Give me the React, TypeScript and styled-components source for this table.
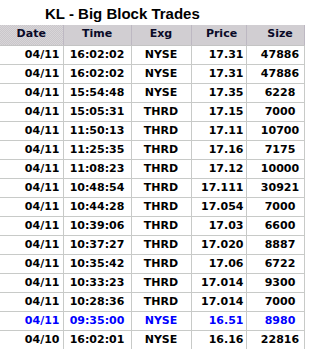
import React from "react";
import styled, { createGlobalStyle } from "styled-components";

const Global = createGlobalStyle`
  html, body { margin: 0; padding: 0; background: #ffffff; }
  body { font-family: "DejaVu Sans", Verdana, sans-serif; }
`;

const Wrap = styled.div`
  width: 312px;
  height: 349px;
  overflow: hidden;
  background: #ffffff;
`;

const Title = styled.div`
  height: 25px;
  box-sizing: border-box;
  padding: 5px 0 0 45px;
  font-family: "Liberation Sans", Arial, sans-serif;
  font-weight: bold;
  font-size: 15px;
  line-height: 18px;
  color: #000000;
  white-space: nowrap;
`;

const Table = styled.table`
  border-collapse: collapse;
  table-layout: fixed;
  width: 304px;
  font-family: "DejaVu Sans", Verdana, sans-serif;
  font-weight: bold;
  font-size: 11px;
`;

const Th = styled.th<{ $w: number; $pl?: number }>`
  width: ${(p) => p.$w}px;
  height: 20px;
  padding: 0 0 1px ${(p) => p.$pl ?? 0}px;
  box-sizing: border-box;
  background: repeating-conic-gradient(#d8d5d8 0 25%, #cac7cb 0 50%) 0 0 / 2px 2px;
  color: #0a0a28;
  text-align: center;
  border-right: 1px solid #bdb8c2;
  border-bottom: 1px solid #c4c4c4;
  font-weight: bold;
  line-height: 18px;
`;

const Tr = styled.tr<{ $blue?: boolean }>`
  color: ${(p) => (p.$blue ? "#0000ff" : "#000000")};
`;

const Td = styled.td<{ $align: "left" | "center" | "right"; $pl?: number; $pr?: number }>`
  height: 19px;
  box-sizing: border-box;
  padding: 0 ${(p) => p.$pr ?? 0}px 0 ${(p) => p.$pl ?? 0}px;
  text-align: ${(p) => p.$align};
  border-right: 1px solid #c8cac8;
  border-bottom: 1px solid #c8cac8;
  line-height: 18px;
  white-space: nowrap;
  background: #ffffff;
`;

type Row = [string, string, string, string, string, boolean?];

const rows: Row[] = [
  ["04/11", "16:02:02", "NYSE", "17.31", "47886"],
  ["04/11", "16:02:02", "NYSE", "17.31", "47886"],
  ["04/11", "15:54:48", "NYSE", "17.35", "6228"],
  ["04/11", "15:05:31", "THRD", "17.15", "7000"],
  ["04/11", "11:50:13", "THRD", "17.11", "10700"],
  ["04/11", "11:25:35", "THRD", "17.16", "7175"],
  ["04/11", "11:08:23", "THRD", "17.12", "10000"],
  ["04/11", "10:48:54", "THRD", "17.111", "30921"],
  ["04/11", "10:44:28", "THRD", "17.054", "7000"],
  ["04/11", "10:39:06", "THRD", "17.03", "6600"],
  ["04/11", "10:37:27", "THRD", "17.020", "8887"],
  ["04/11", "10:35:42", "THRD", "17.06", "6722"],
  ["04/11", "10:33:23", "THRD", "17.014", "9300"],
  ["04/11", "10:28:36", "THRD", "17.014", "7000"],
  ["04/11", "09:35:00", "NYSE", "16.51", "8980", true],
  ["04/10", "16:02:01", "NYSE", "16.16", "22816"],
];

export default function App() {
  return (
    <Wrap>
      <Global />
      <Title>KL - Big Block Trades</Title>
      <Table>
        <thead>
          <tr>
            <Th $w={63}>Date</Th>
            <Th $w={68}>Time</Th>
            <Th $w={60}>Exg</Th>
            <Th $w={55} $pl={6}>Price</Th>
            <Th $w={58} $pl={10}>Size</Th>
          </tr>
        </thead>
        <tbody>
          {rows.map((r, i) => (
            <Tr key={i} $blue={r[5]}>
              <Td $align="right" $pr={3}>{r[0]}</Td>
              <Td $align="center">{r[1]}</Td>
              <Td $align="center">{r[2]}</Td>
              <Td $align="right" $pr={2}>{r[3]}</Td>
              <Td $align="center" $pl={10}>{r[4]}</Td>
            </Tr>
          ))}
        </tbody>
      </Table>
    </Wrap>
  );
}
